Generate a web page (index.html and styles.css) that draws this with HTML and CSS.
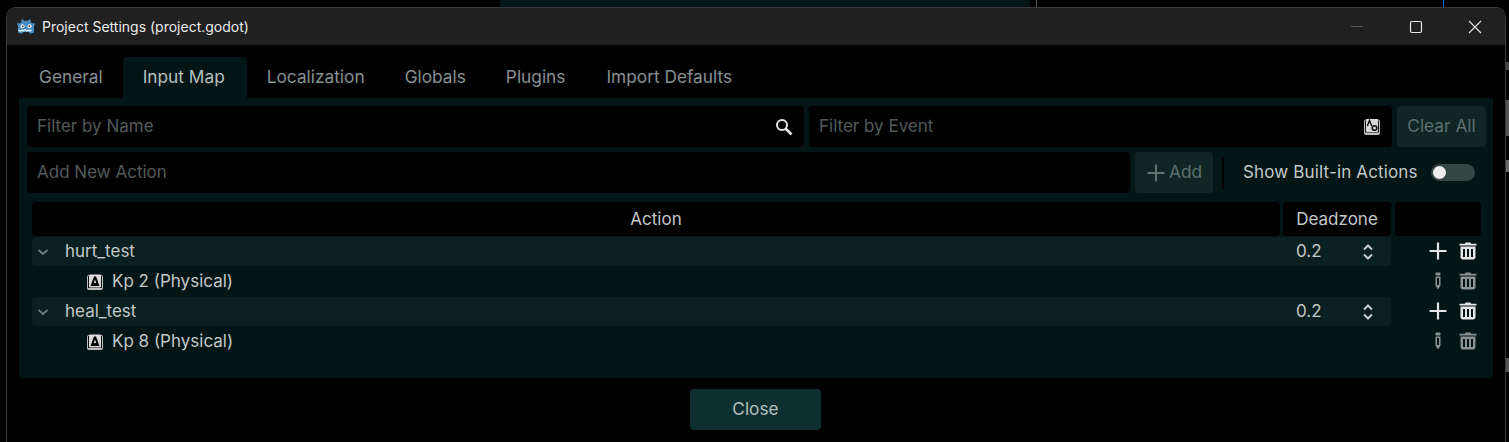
FILE: index.html
```html
<!DOCTYPE html>
<html lang="en">
<head>
  <meta charset="UTF-8" />
  <title>Project Settings (project.godot)</title>
  <link rel="stylesheet" href="styles.css">
</head>
<body>
  <div class="behind behind-a"></div>
  <div class="behind behind-b"></div>
  <div class="behind behind-c"></div>
  <div class="behind behind-d"></div>
  <div class="behind behind-e"></div>
  <div class="behind behind-f"></div>
  <div class="behind behind-g"></div>

  <div class="window">
    <div class="titlebar">
      <svg class="logo" width="18" height="18" viewBox="0 0 18 18">
        <path fill="#478cbf" d="M6 1.200l1 1.600h4l1-1.600 1.800.7-.3 2 2.200 1.600 1.600-.8L18 6.500l-1 1.300V14.500c-1.500.6-2.800.9-4.500 1.100L12 14H6l-.5 1.600C3.800 15.400 2.500 15.100 1 14.500V7.800L0 6.500l.7-1.800 1.600.8L4.500 3.900l-.3-2z"/>
        <circle cx="5.500" cy="8.200" r="2" fill="#fff"/>
        <circle cx="12.500" cy="8.200" r="2" fill="#fff"/>
        <circle cx="5.700" cy="8.300" r="1" fill="#414042"/>
        <circle cx="12.300" cy="8.300" r="1" fill="#414042"/>
        <path fill="none" stroke="#fff" stroke-width="1.200" d="M1.500 11.800c1.500 1.800 2.500 1.200 3.500.3 1 1 1.500 1 2 .2.500-.5 1.500-.5 2 0 .5.800 1 .8 2-.2 1 .9 2 1.500 3.500-.3"/>
      </svg>
      <span class="title">Project Settings (project.godot)</span>
      <div class="window-btns">
        <svg width="14" height="14" viewBox="0 0 14 14"><path d="M1 6.500h12" stroke="#555" fill="none"/></svg>
        <svg width="14" height="14" viewBox="0 0 14 14"><rect x="1.500" y="1.500" width="11" height="11" rx="1.500" stroke="#e6e6e6" fill="none" stroke-width="1.200"/></svg>
        <svg width="14" height="14" viewBox="0 0 14 14"><path d="M1 1l12 12M13 1L1 13" stroke="#e6e6e6" fill="none" stroke-width="1.100"/></svg>
      </div>
    </div>

    <div class="content">
      <div class="tabs">
        <div class="tab">General</div>
        <div class="tab active">Input Map</div>
        <div class="tab">Localization</div>
        <div class="tab">Globals</div>
        <div class="tab plugins">Plugins</div>
        <div class="tab">Import Defaults</div>
      </div>

      <div class="panel">
        <div class="toolbar">
          <div class="field name-filter">
            <span>Filter by Name</span>
            <svg width="18" height="18" viewBox="0 0 18 18"><circle cx="7" cy="7" r="5" fill="none" stroke="#e4e4e4" stroke-width="2"/><path d="M10.500 10.500l6 6" stroke="#e4e4e4" stroke-width="2.600"/></svg>
          </div>
          <div class="field event-filter">
            <span>Filter by Event</span>
            <svg width="18" height="18" viewBox="0 0 18 18">
              <rect x="1" y="1.500" width="16" height="15.500" rx="2" fill="#bdbfbf"/>
              <rect x="2" y="2.500" width="14" height="12" fill="#111"/>
              <rect x="3" y="1" width="12" height="13" rx="1" fill="#d8d8d8"/>
              <path d="M4.300 8l2.200-5.500L8.700 8" fill="none" stroke="#111" stroke-width="1.400"/>
              <circle cx="11.500" cy="10" r="2.300" fill="none" stroke="#111" stroke-width="1.600"/>
            </svg>
          </div>
          <button class="btn clear-btn">Clear All</button>
        </div>

        <div class="toolbar">
          <div class="field add-field"><span>Add New Action</span></div>
          <button class="btn add-btn">
            <svg width="20" height="20" viewBox="0 0 20 20"><path d="M10 1.500v17M1.500 10h17" stroke="#617271" stroke-width="2" fill="none"/></svg>
            <span class="btn-text">Add</span>
          </button>
          <div class="vsep"></div>
          <span class="builtin">Show Built-in Actions</span>
          <div class="toggle"><div class="knob"></div></div>
        </div>

        <div class="tree">
          <div class="tree-head">
            <div class="head-cell head-action">Action</div>
            <div class="head-cell head-dead">Deadzone</div>
            <div class="head-cell head-empty"></div>
          </div>

          <div class="row action-row">
            <div class="row-main">
              <svg class="chev" width="12" height="12" viewBox="0 0 12 12"><path d="M1.500 4l4.500 4 4.500-4" stroke="#6d7c7b" stroke-width="2" fill="none"/></svg>
              <span class="name">hurt_test</span>
              <span class="dead">0.2</span>
              <svg class="spin" width="12" height="18" viewBox="0 0 12 18"><path d="M2 6.500l4-4 4 4M2 11.500l4 4 4-4" stroke="#c4caca" stroke-width="2" fill="none"/></svg>
            </div>
            <div class="row-btns">
              <svg width="20" height="20" viewBox="0 0 20 20"><path d="M10 1.500v17M1.500 10h17" stroke="#e4e6e6" stroke-width="2.200" fill="none"/></svg>
              <svg width="20" height="20" viewBox="0 0 20 20"><use href="#trash"/></svg>
            </div>
          </div>
          <div class="row event-row">
            <div class="row-main">
              <svg class="key" width="18" height="18" viewBox="0 0 18 18"><use href="#key"/></svg>
              <span>Kp 2 (Physical)</span>
            </div>
            <div class="row-btns dim">
              <svg width="20" height="20" viewBox="0 0 20 20"><use href="#pencil"/></svg>
              <svg width="20" height="20" viewBox="0 0 20 20"><use href="#trash"/></svg>
            </div>
          </div>
          <div class="row action-row">
            <div class="row-main">
              <svg class="chev" width="12" height="12" viewBox="0 0 12 12"><path d="M1.500 4l4.500 4 4.500-4" stroke="#6d7c7b" stroke-width="2" fill="none"/></svg>
              <span class="name">heal_test</span>
              <span class="dead">0.2</span>
              <svg class="spin" width="12" height="18" viewBox="0 0 12 18"><path d="M2 6.500l4-4 4 4M2 11.500l4 4 4-4" stroke="#c4caca" stroke-width="2" fill="none"/></svg>
            </div>
            <div class="row-btns">
              <svg width="20" height="20" viewBox="0 0 20 20"><path d="M10 1.500v17M1.500 10h17" stroke="#e4e6e6" stroke-width="2.200" fill="none"/></svg>
              <svg width="20" height="20" viewBox="0 0 20 20"><use href="#trash"/></svg>
            </div>
          </div>
          <div class="row event-row">
            <div class="row-main">
              <svg class="key" width="18" height="18" viewBox="0 0 18 18"><use href="#key"/></svg>
              <span>Kp 8 (Physical)</span>
            </div>
            <div class="row-btns dim">
              <svg width="20" height="20" viewBox="0 0 20 20"><use href="#pencil"/></svg>
              <svg width="20" height="20" viewBox="0 0 20 20"><use href="#trash"/></svg>
            </div>
          </div>
        </div>
      </div>

      <div class="footer"><button class="btn close-btn">Close</button></div>
    </div>
  </div>

  <svg class="defs" width="0" height="0">
    <defs>
      <g id="trash" fill="#e4e6e6">
        <path d="M7.500 1.500h5l.5 1.300h5.500v1.700h-17V2.800H7z"/>
        <path fill-rule="evenodd" d="M2.500 5.500h15V16c0 1.500-1 2.500-2.500 2.500H5c-1.500 0-2.500-1-2.500-2.500zM5 8v8h2V8zm4 0v8h2V8zm4 0v8h2V8z"/>
      </g>
      <g id="pencil" fill="#e4e6e6">
        <rect x="7.500" y="1.500" width="5" height="3" rx="1"/>
        <path fill-rule="evenodd" d="M7.500 5.500h5v9l-2.500 4-2.500-4zM9 7v7h2V7z"/>
      </g>
      <g id="key">
        <rect x="1" y="2" width="16" height="15" rx="2" fill="#bdbfbf"/>
        <rect x="2" y="3" width="14" height="12" fill="#0a0a0a"/>
        <rect x="3" y="1.500" width="12" height="13" rx="1" fill="#dcdcdc"/>
        <path d="M4.500 13L8 3.500h2L13.500 13z" fill="#000"/>
        <path d="M9 6.500l1.300 3.500H7.700z" fill="#dcdcdc"/>
      </g>
    </defs>
  </svg>
</body>
</html>
```

FILE: styles.css
```css
* {
  box-sizing: border-box;
}
body {
  margin: 0;
  height: 442px;
  overflow: hidden;
  padding: 7px 3px 0 6px;
  background-color: #000;
  font-family: Inter, "Noto Sans", sans-serif;
  font-size: 17px;
  color: #c2c8c8;
  position: relative;
}
.defs {
  position: absolute;
}
/* bits of the editor showing behind the dialog */
.behind {
  position: absolute;
}
.behind-a {
  left: 500px;
  top: 0;
  width: 530px;
  height: 7px;
  background: #031514;
}
.behind-b {
  left: 1036px;
  top: 0;
  width: 1px;
  height: 7px;
  background: #555;
}
.behind-c {
  left: 1443px;
  top: 0;
  width: 1px;
  height: 7px;
  background: #1668d0;
}
.behind-d {
  left: 1506px;
  top: 100px;
  width: 3px;
  height: 36px;
  background: #555;
}
.behind-e {
  left: 1506px;
  top: 160px;
  width: 3px;
  height: 12px;
  background: #666;
}
.behind-f {
  left: 1506px;
  top: 62px;
  width: 3px;
  height: 8px;
  background: #444;
}
.behind-g {
  left: 1506px;
  top: 358px;
  width: 3px;
  height: 14px;
  background: #555;
}
.window {
  height: 435px;
  display: flex;
  flex-direction: column;
  background: #000;
  border-radius: 10px 10px 0 0;
  border: 1px solid #3a3a3a;
  border-bottom: none;
  overflow: hidden;
}
.titlebar {
  height: 37px;
  flex: none;
  display: flex;
  align-items: center;
  padding-left: 10px;
  background: #202020;
}
.logo {
  margin-right: 7px;
}
.title {
  font-size: 14px;
  color: #eaeaea;
}
.window-btns {
  margin-left: auto;
  display: flex;
  gap: 45px;
  padding-right: 23px;
}
.content {
  flex: 1;
  padding: 0 12px;
  display: flex;
  flex-direction: column;
}
.tabs {
  display: flex;
  padding-top: 12px;
  height: 53px;
  flex: none;
}
.tab {
  padding: 0 20px;
  height: 41px;
  line-height: 40px;
  font-size: 17.300px;
  color: #879191;
  border-radius: 4px 4px 0 0;
  white-space: nowrap;
}
.tab.active {
  padding-right: 22px;
  background: #031514;
  color: #b6c0c0;
}
.tab.plugins {
  padding-right: 21px;
}
.panel {
  height: 280px;
  flex: none;
  background: #031514;
  padding: 8px 7px 8px 8px;
  border-radius: 0 0 4px 4px;
  display: flex;
  flex-direction: column;
  gap: 5px;
}
.toolbar {
  display: flex;
  align-items: center;
  gap: 5px;
  height: 41px;
  flex: none;
}
.field {
  height: 41px;
  background: #000;
  border-radius: 4px;
  padding: 0 11px 0 10px;
  display: flex;
  align-items: center;
  justify-content: space-between;
  font-size: 17px;
  color: #525a5a;
}
.field span {
  padding-bottom: 2px;
}
.name-filter {
  width: 777px;
}
.event-filter {
  width: 583px;
}
.add-field {
  width: 1103px;
}
.btn {
  font: inherit;
  border: none;
  border-radius: 4px;
  background: #0f2625;
  color: #5e6f6e;
  height: 41px;
  font-size: 17.300px;
  padding: 0 0 2px;
}
.clear-btn {
  width: 89px;
}
.add-btn {
  width: 78px;
  display: flex;
  align-items: center;
  justify-content: center;
  gap: 3px;
  padding: 0;
}
.btn-text {
  padding-bottom: 2px;
}
.vsep {
  width: 2px;
  height: 32px;
  margin-left: 4px;
  background: #000;
}
.builtin {
  margin-left: 14px;
  padding-bottom: 2px;
  font-size: 17px;
  letter-spacing: 0.150px;
  color: #c2c8c8;
  white-space: nowrap;
}
.toggle {
  width: 44px;
  height: 17px;
  margin-left: 8px;
  border-radius: 9px;
  background: #364644;
  padding: 2px 0 0 2px;
}
.knob {
  width: 13px;
  height: 13px;
  border-radius: 50%;
  background: #eee;
}
.tree {
  margin: 4px 5px 0;
  display: flex;
  flex-direction: column;
}
.tree-head {
  display: flex;
  gap: 3px;
  height: 35px;
}
.head-cell {
  background: #000;
  border-radius: 4px;
  height: 34px;
  display: flex;
  align-items: center;
  justify-content: center;
  font-size: 17px;
  color: #c2c8c8;
}
.head-action {
  width: 1248px;
}
.head-dead {
  width: 108px;
}
.head-empty {
  width: 86px;
  margin-left: 1px;
}
.row {
  display: flex;
  height: 30px;
}
.row-main {
  width: 1359px;
  display: flex;
  align-items: center;
  font-size: 17px;
  color: #c2c8c8;
}
.row-main span {
  padding-bottom: 2px;
}
.action-row .row-main {
  background: #0a1f1f;
  border-radius: 4px;
  height: 29px;
  padding-left: 5px;
}
.event-row .row-main {
  padding-left: 54px;
}
.chev {
  margin-right: 16px;
}
.name {
  flex: 1;
}
.dead {
  width: 66px;
}
.spin {
  margin-right: 17px;
}
.key {
  margin-right: 8px;
}
.row-btns {
  display: flex;
  align-items: center;
  gap: 10px;
  padding-left: 37px;
  height: 28px;
}
.row-btns.dim {
  opacity: 0.6;
}
.footer {
  flex: 1;
  display: flex;
  justify-content: center;
  padding-top: 11px;
}
.close-btn {
  width: 131px;
  height: 41px;
  margin-right: 1px;
  background: #0e2f2f;
  color: #b4c0c0;
}
```
